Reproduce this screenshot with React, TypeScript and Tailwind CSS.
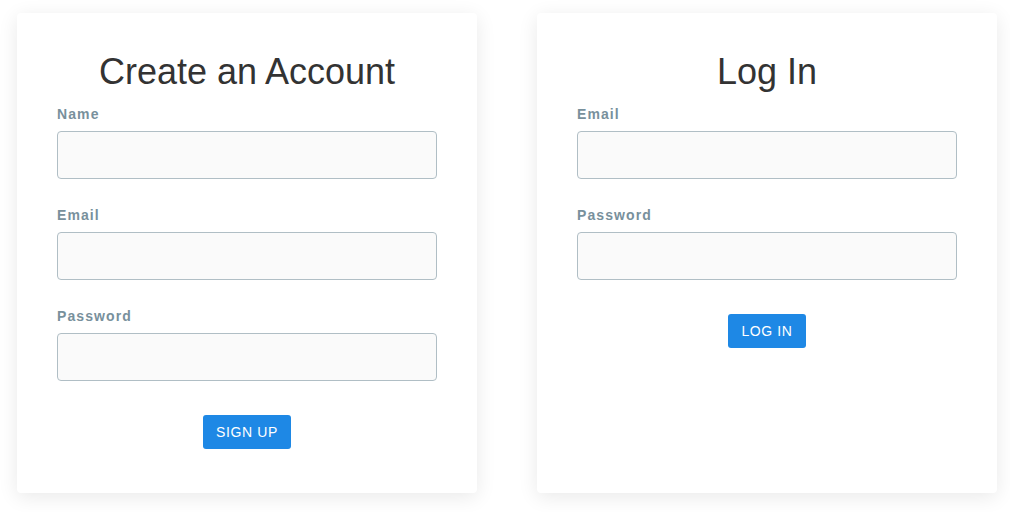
const Field = ({ label }: { label: string }) => (
  <div className="flex flex-col">
    <label className="text-[14px] leading-[20px] font-bold tracking-[1.1px] text-[#78909c]">{label}</label>
    <input className="mt-[7px] h-[48px] w-full rounded-[4px] border border-[#b0bec5] bg-[#fafafa] px-3 outline-none" />
  </div>
)

const Card = ({ title, fields, button }: { title: string; fields: string[]; button: string }) => (
  <div className="w-[460px] rounded-[4px] bg-white px-10 pt-[38px] pb-[44px] shadow-[0_4px_20px_rgba(0,0,0,0.09)]">
    <h1 className="text-center text-[36px] leading-[41px] text-[#333333]">{title}</h1>
    <div className="mt-[12px] flex flex-col gap-[26px]">
      {fields.map((f) => (
        <Field key={f} label={f} />
      ))}
    </div>
    <div className="mt-[34px] flex justify-center">
      <button className="h-[34px] rounded-[3px] bg-[#1e88e5] px-[13px] text-[14px] tracking-[0.6px] text-white">
        {button}
      </button>
    </div>
  </div>
)

export default function App() {
  return (
    <div className="min-h-[512px] bg-white pt-[13px] pl-[17px] font-['Liberation_Sans',Arial,sans-serif]">
      <div className="flex items-stretch gap-[60px]">
        <Card title="Create an Account" fields={["Name", "Email", "Password"]} button="SIGN UP" />
        <Card title="Log In" fields={["Email", "Password"]} button="LOG IN" />
      </div>
    </div>
  )
}
